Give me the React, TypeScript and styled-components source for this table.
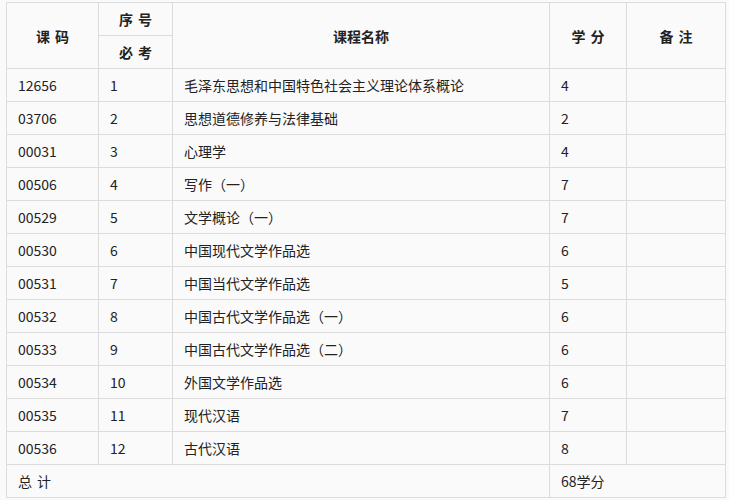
import styled, { createGlobalStyle } from "styled-components";

const GlobalStyle = createGlobalStyle`
  html, body {
    margin: 0;
    padding: 0;
    background: #fafafa;
  }
  body {
    font-family: "Noto Sans CJK SC", "Noto Sans", sans-serif;
    color: #222;
  }
`;

const Page = styled.div`
  padding: 2px 4px 0 6px;
`;

const Table = styled.table`
  width: 719px;
  border-collapse: collapse;
  table-layout: fixed;
  font-size: 14px;
  background: #fafafa;
`;

const Head = styled.th`
  border: 1px solid #dcdcdc;
  height: 32px;
  padding: 0;
  font-weight: 700;
  text-align: center;
  white-space: pre;
  line-height: 32px;
`;

const Cell = styled.td`
  border: 1px solid #dcdcdc;
  height: 32px;
  padding: 0 0 0 11px;
  text-align: left;
  white-space: pre;
  line-height: 32px;
`;

// wider gap between the two characters of a spaced label
const Gap = styled.span`
  display: inline-block;
  width: 5px;
`;

const Spaced = ({ a, b }: { a: string; b: string }) => (
  <>
    {a}
    <Gap> </Gap>
    {b}
  </>
);

const courses: [string, string, string, string][] = [
  ["12656", "1", "毛泽东思想和中国特色社会主义理论体系概论", "4"],
  ["03706", "2", "思想道德修养与法律基础", "2"],
  ["00031", "3", "心理学", "4"],
  ["00506", "4", "写作（一）", "7"],
  ["00529", "5", "文学概论（一）", "7"],
  ["00530", "6", "中国现代文学作品选", "6"],
  ["00531", "7", "中国当代文学作品选", "5"],
  ["00532", "8", "中国古代文学作品选（一）", "6"],
  ["00533", "9", "中国古代文学作品选（二）", "6"],
  ["00534", "10", "外国文学作品选", "6"],
  ["00535", "11", "现代汉语", "7"],
  ["00536", "12", "古代汉语", "8"],
];

export default function App() {
  return (
    <Page>
      <GlobalStyle />
      <Table>
        <colgroup>
          <col style={{ width: 92 }} />
          <col style={{ width: 74 }} />
          <col style={{ width: 377 }} />
          <col style={{ width: 77 }} />
          <col style={{ width: 99 }} />
        </colgroup>
        <thead>
          <tr>
            <Head rowSpan={2}>
              <Spaced a="课" b="码" />
            </Head>
            <Head>
              <Spaced a="序" b="号" />
            </Head>
            <Head rowSpan={2}>课程名称</Head>
            <Head rowSpan={2}>
              <Spaced a="学" b="分" />
            </Head>
            <Head rowSpan={2}>
              <Spaced a="备" b="注" />
            </Head>
          </tr>
          <tr>
            <Head>
              <Spaced a="必" b="考" />
            </Head>
          </tr>
        </thead>
        <tbody>
          {courses.map(([code, no, name, credit]) => (
            <tr key={code}>
              <Cell>{code}</Cell>
              <Cell>{no}</Cell>
              <Cell>{name}</Cell>
              <Cell>{credit}</Cell>
              <Cell />
            </tr>
          ))}
          <tr>
            <Cell colSpan={3}>
              <Spaced a="总" b="计" />
            </Cell>
            <Cell colSpan={2}>68学分</Cell>
          </tr>
        </tbody>
      </Table>
    </Page>
  );
}
